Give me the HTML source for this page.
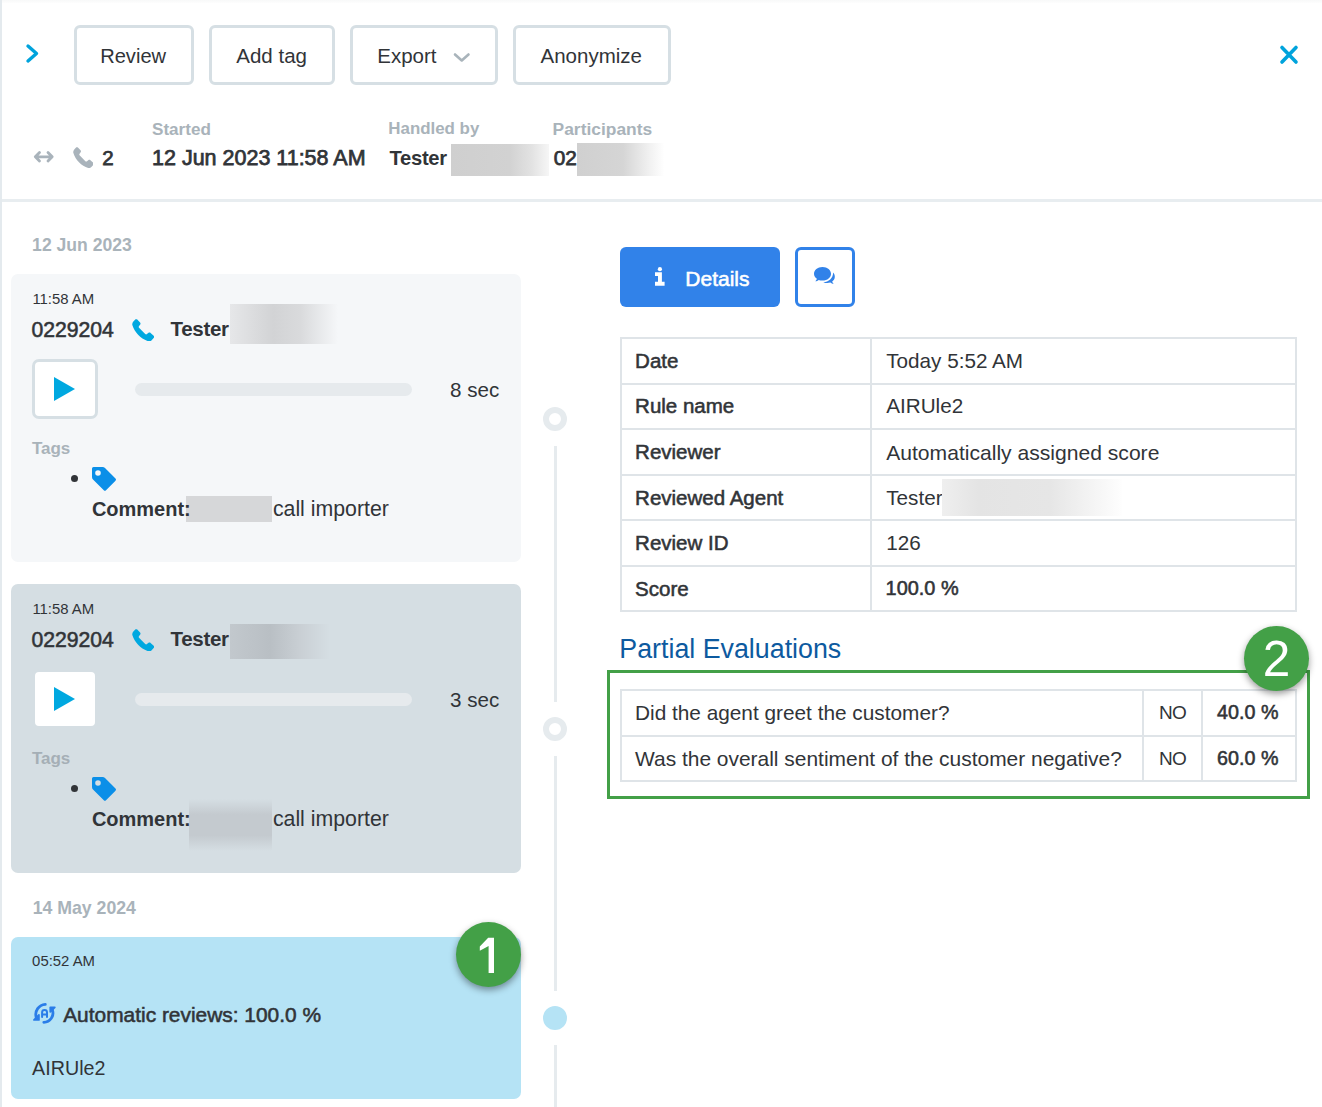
<!DOCTYPE html>
<html><head><meta charset="utf-8"><style>
html,body{margin:0;padding:0}
body{width:1322px;height:1107px;overflow:hidden;position:relative;background:#fff;font-family:"Liberation Sans",sans-serif}
.t{position:absolute;white-space:nowrap}
.b{position:absolute}
</style></head><body>
<div class="b" style="left:0px;top:0px;width:2px;height:1107px;background:#e4eaee"></div>
<div class="b" style="left:2px;top:0px;width:1320px;height:3px;background:linear-gradient(#f8f9f9,#fdfdfd)"></div>
<div class="b" style="left:2px;top:199px;width:1320px;height:3px;background:#e8edf0"></div>
<svg class="b" style="left:20px;top:40px" width="24" height="26" viewBox="20 40 24 26"><polyline points="28,46 36.5,53.5 28,61" fill="none" stroke="#00a3dc" stroke-width="3.4" stroke-linecap="round" stroke-linejoin="round"/></svg>
<div class="b" style="left:74px;top:25px;width:114px;height:54px;border:3px solid #d6dfe4;border-radius:6px;background:#fff"></div>
<div class="b" style="left:209px;top:25px;width:120px;height:54px;border:3px solid #d6dfe4;border-radius:6px;background:#fff"></div>
<div class="b" style="left:350px;top:25px;width:142px;height:54px;border:3px solid #d6dfe4;border-radius:6px;background:#fff"></div>
<div class="b" style="left:513px;top:25px;width:152px;height:54px;border:3px solid #d6dfe4;border-radius:6px;background:#fff"></div>
<div class="t" style="left:100.2px;top:45.6px;font-size:20.1px;line-height:20.1px;color:#313438;">Review</div>
<div class="t" style="left:236.3px;top:45.5px;font-size:20.5px;line-height:20.5px;color:#313438;">Add tag</div>
<div class="t" style="left:377.3px;top:45.5px;font-size:20.5px;line-height:20.5px;color:#313438;">Export</div>
<div class="t" style="left:540.5px;top:45.5px;font-size:20.5px;line-height:20.5px;color:#313438;">Anonymize</div>
<svg class="b" style="left:450px;top:50px" width="24" height="16" viewBox="450 50 24 16"><polyline points="455,54.5 461.75,60.5 468.5,54.5" fill="none" stroke="#a9b4bb" stroke-width="2.6" stroke-linecap="round" stroke-linejoin="round"/></svg>
<svg class="b" style="left:1276px;top:42px" width="26" height="26" viewBox="1276 42 26 26"><path d="M1282,47.5 L1296,62 M1296,47.5 L1282,62" fill="none" stroke="#00a3dc" stroke-width="3.6" stroke-linecap="round"/></svg>
<svg class="b" style="left:30px;top:146px" width="28" height="22" viewBox="30 146 28 22"><path d="M35.5,156.8 H52 M39.5,152.5 L35.3,156.8 L39.5,161.1 M48,152.5 L52.2,156.8 L48,161.1" fill="none" stroke="#a9b3bb" stroke-width="2.8" stroke-linecap="round" stroke-linejoin="round"/></svg>
<svg class="b" style="left:72.5px;top:146.5px" width="20.9" height="21.4" viewBox="3.8 4.9 21.6 22.1" preserveAspectRatio="none"><path d="M7.2,5.2 C7.8,4.9 8.4,5.0 8.9,5.5 L11.6,8.3 C12.2,8.9 12.2,9.8 11.7,10.4 L10.6,11.8 C10.2,12.3 10.2,13 10.6,13.5 L16.6,19.5 C17.1,20 17.8,20 18.3,19.6 L19.8,18.4 C20.4,17.9 21.3,17.9 21.8,18.5 L24.8,21.3 C25.4,21.9 25.4,22.8 24.8,23.4 L22.8,25.6 C22,26.5 20.8,27 19.6,26.6 C12.5,24.3 6.3,18 4.2,11 C3.8,9.7 4.2,8.4 5.1,7.4 Z" fill="#a9b3bb"/></svg>
<div class="t" style="left:102.3px;top:147.6px;font-size:20.5px;line-height:20.5px;-webkit-text-stroke:0.55px #313438;color:#313438;-webkit-text-stroke-width:0.75px">2</div>
<div class="t" style="left:152.0px;top:120.9px;font-size:17.1px;line-height:17.1px;font-weight:bold;color:#a9b3ba;">Started</div>
<div class="t" style="left:388.3px;top:120.9px;font-size:16.9px;line-height:16.9px;font-weight:bold;color:#a9b3ba;">Handled by</div>
<div class="t" style="left:552.6px;top:120.9px;font-size:17.4px;line-height:17.4px;font-weight:bold;color:#a9b3ba;">Participants</div>
<div class="t" style="left:152.0px;top:147.5px;font-size:21.5px;line-height:21.5px;-webkit-text-stroke:0.55px #313438;color:#313438;-webkit-text-stroke-width:0.75px">12 Jun 2023 11:58 AM</div>
<div class="t" style="left:389.5px;top:147.5px;font-size:20.2px;line-height:20.2px;font-weight:bold;color:#313438;letter-spacing:-0.3px">Tester</div>
<div class="t" style="left:553.8px;top:147.6px;font-size:20.8px;line-height:20.8px;-webkit-text-stroke:0.55px #313438;color:#313438;-webkit-text-stroke-width:0.75px">02</div>
<div class="b" style="left:451px;top:144px;width:98px;height:32px;background:linear-gradient(90deg,#cfcfcf 0%,#d2d2d2 60%,#e2e2e2 82%,#f6f6f6 100%)"></div>
<div class="b" style="left:577px;top:143px;width:92px;height:33px;background:linear-gradient(90deg,#d0d0d0 0%,#d5d5d5 50%,#f2f2f2 80%,#ffffff 95%)"></div>
<div class="t" style="left:32.1px;top:236.9px;font-size:17.6px;line-height:17.6px;font-weight:bold;color:#a9b3ba;">12 Jun 2023</div>
<div class="b" style="left:11px;top:274px;width:510px;height:288px;background:#f5f7f9;border-radius:7px"></div>
<div class="t" style="left:32.4px;top:291.8px;font-size:14.9px;line-height:14.9px;color:#313438;">11:58 AM</div>
<div class="t" style="left:31.4px;top:318.6px;font-size:21.2px;line-height:21.2px;-webkit-text-stroke:0.55px #313438;color:#313438;">0229204</div>
<svg class="b" style="left:131.8px;top:318.7px" width="22.3" height="22.7" viewBox="3.8 4.9 21.6 22.1" preserveAspectRatio="none"><path d="M7.2,5.2 C7.8,4.9 8.4,5.0 8.9,5.5 L11.6,8.3 C12.2,8.9 12.2,9.8 11.7,10.4 L10.6,11.8 C10.2,12.3 10.2,13 10.6,13.5 L16.6,19.5 C17.1,20 17.8,20 18.3,19.6 L19.8,18.4 C20.4,17.9 21.3,17.9 21.8,18.5 L24.8,21.3 C25.4,21.9 25.4,22.8 24.8,23.4 L22.8,25.6 C22,26.5 20.8,27 19.6,26.6 C12.5,24.3 6.3,18 4.2,11 C3.8,9.7 4.2,8.4 5.1,7.4 Z" fill="#00a8e0"/></svg>
<div class="t" style="left:170.5px;top:318.5px;font-size:20.5px;line-height:20.5px;font-weight:bold;color:#313438;letter-spacing:-0.3px">Tester</div>
<div class="b" style="left:230px;top:304px;width:108px;height:40px;background:linear-gradient(90deg,#e6e7e9 0%,#d2d3d5 40%,#d9dadc 65%,#f5f7f9 100%)"></div>
<div class="b" style="left:32px;top:359px;width:60px;height:54px;border:3px solid #d6dfe4;border-radius:7px;background:#fff"></div>
<svg class="b" style="left:50px;top:374px" width="30" height="30" viewBox="50 374 30 30"><polygon points="54,377 75,389 54,401" fill="#00a8e0"/></svg>
<div class="b" style="left:135px;top:383px;width:277px;height:13px;background:#e6eaed;border-radius:7px"></div>
<div class="t" style="left:450.0px;top:379.9px;font-size:20.6px;line-height:20.6px;color:#313438;">8 sec</div>
<div class="t" style="left:31.9px;top:439.7px;font-size:17px;line-height:17px;font-weight:bold;color:#a9b3ba;">Tags</div>
<div class="b" style="left:71px;top:475px;width:7px;height:7px;background:#313438;border-radius:50%"></div>
<svg class="b" style="left:90px;top:465px" width="28" height="28" viewBox="0 0 28 28"><path d="M3.5,2 H12.5 Q14,2 15,3 L25.5,13.5 Q26.6,14.6 25.5,15.7 L16,25.2 Q14.9,26.3 13.8,25.2 L3,14.5 Q2,13.5 2,12 V3.5 Q2,2 3.5,2 Z M8,5.2 A2.8,2.8 0 1 0 8,10.8 A2.8,2.8 0 1 0 8,5.2 Z" fill="#0b8fe8" fill-rule="evenodd"/></svg>
<div class="b" style="left:186px;top:496px;width:86px;height:26px;background:#d6d7d9"></div>
<div class="t" style="left:91.9px;top:499.0px;font-size:20px;line-height:20px;font-weight:bold;color:#313438;">Comment:</div>
<div class="t" style="left:272.9px;top:498.8px;font-size:21.3px;line-height:21.3px;color:#313438;">call importer</div>
<div class="b" style="left:11px;top:584px;width:510px;height:289px;background:#d5dee3;border-radius:7px"></div>
<div class="t" style="left:32.4px;top:601.8px;font-size:14.9px;line-height:14.9px;color:#313438;">11:58 AM</div>
<div class="t" style="left:31.4px;top:628.6px;font-size:21.2px;line-height:21.2px;-webkit-text-stroke:0.55px #313438;color:#313438;">0229204</div>
<svg class="b" style="left:131.8px;top:628.7px" width="22.3" height="22.7" viewBox="3.8 4.9 21.6 22.1" preserveAspectRatio="none"><path d="M7.2,5.2 C7.8,4.9 8.4,5.0 8.9,5.5 L11.6,8.3 C12.2,8.9 12.2,9.8 11.7,10.4 L10.6,11.8 C10.2,12.3 10.2,13 10.6,13.5 L16.6,19.5 C17.1,20 17.8,20 18.3,19.6 L19.8,18.4 C20.4,17.9 21.3,17.9 21.8,18.5 L24.8,21.3 C25.4,21.9 25.4,22.8 24.8,23.4 L22.8,25.6 C22,26.5 20.8,27 19.6,26.6 C12.5,24.3 6.3,18 4.2,11 C3.8,9.7 4.2,8.4 5.1,7.4 Z" fill="#00a8e0"/></svg>
<div class="t" style="left:170.5px;top:628.5px;font-size:20.5px;line-height:20.5px;font-weight:bold;color:#313438;letter-spacing:-0.3px">Tester</div>
<div class="b" style="left:230px;top:624px;width:100px;height:35px;background:linear-gradient(90deg,#c2c8cd 0%,#b9bfc4 40%,#c9cfd4 70%,#d5dee3 100%)"></div>
<div class="b" style="left:32px;top:669px;width:60px;height:54px;border:3px solid #d5dee3;border-radius:7px;background:#fff"></div>
<svg class="b" style="left:50px;top:684px" width="30" height="30" viewBox="50 684 30 30"><polygon points="54,687 75,699 54,711" fill="#00a8e0"/></svg>
<div class="b" style="left:135px;top:693px;width:277px;height:13px;background:#e6eaed;border-radius:7px"></div>
<div class="t" style="left:450.0px;top:689.9px;font-size:20.6px;line-height:20.6px;color:#313438;">3 sec</div>
<div class="t" style="left:31.9px;top:749.7px;font-size:17px;line-height:17px;font-weight:bold;color:#a5afb6;">Tags</div>
<div class="b" style="left:71px;top:785px;width:7px;height:7px;background:#313438;border-radius:50%"></div>
<svg class="b" style="left:90px;top:775px" width="28" height="28" viewBox="0 0 28 28"><path d="M3.5,2 H12.5 Q14,2 15,3 L25.5,13.5 Q26.6,14.6 25.5,15.7 L16,25.2 Q14.9,26.3 13.8,25.2 L3,14.5 Q2,13.5 2,12 V3.5 Q2,2 3.5,2 Z M8,5.2 A2.8,2.8 0 1 0 8,10.8 A2.8,2.8 0 1 0 8,5.2 Z" fill="#0b8fe8" fill-rule="evenodd"/></svg>
<div class="b" style="left:189px;top:799px;width:83px;height:52px;background:linear-gradient(#d5dee3,#c4cacf 30%,#c4cacf 70%,#d5dee3)"></div>
<div class="t" style="left:91.9px;top:809.0px;font-size:20px;line-height:20px;font-weight:bold;color:#313438;">Comment:</div>
<div class="t" style="left:272.9px;top:808.8px;font-size:21.3px;line-height:21.3px;color:#313438;">call importer</div>
<div class="t" style="left:32.7px;top:900.4px;font-size:17.7px;line-height:17.7px;font-weight:bold;color:#a9b3ba;">14 May 2024</div>
<div class="b" style="left:11px;top:937px;width:510px;height:162px;background:#b5e3f5;border-radius:7px"></div>
<div class="t" style="left:32.1px;top:954.3px;font-size:14.9px;line-height:14.9px;color:#313438;">05:52 AM</div>
<svg class="b" style="left:28px;top:998px" width="34" height="32" viewBox="0 0 34 32"><g fill="none" stroke="#2a7de8" stroke-width="2.8" stroke-linecap="round"><path d="M17.3,6.3 A10.2,10.2 0 0 0 8.2,19.3"/><path d="M15.8,24.3 A9.2,9.2 0 0 0 24.3,11.8"/><path d="M14.1,19 V14.4 A2.45,2.45 0 0 1 19,14.4 V19 M14.1,16.6 H19" stroke-width="2"/></g><g fill="#2a7de8" stroke="#2a7de8" stroke-width="1.8" stroke-linejoin="round"><polygon points="6,21.9 10.9,17 10.9,21.9"/><polygon points="22.3,9.3 26.8,9.3 22.3,13.8"/></g></svg>
<div class="t" style="left:63.2px;top:1004.7px;font-size:20.9px;line-height:20.9px;-webkit-text-stroke:0.55px #313438;color:#313438;">Automatic reviews: 100.0 %</div>
<div class="t" style="left:32.1px;top:1058.9px;font-size:19.7px;line-height:19.7px;color:#313438;">AIRUle2</div>
<div class="b" style="left:554px;top:446px;width:3px;height:256px;background:#e6ebee"></div>
<div class="b" style="left:554px;top:756px;width:3px;height:235px;background:#e6ebee"></div>
<div class="b" style="left:554px;top:1045px;width:3px;height:62px;background:#e6ebee"></div>
<div class="b" style="left:543px;top:407px;width:12px;height:12px;border:6px solid #e6ebee;border-radius:50%"></div>
<div class="b" style="left:543px;top:717px;width:12px;height:12px;border:6px solid #e6ebee;border-radius:50%"></div>
<div class="b" style="left:543px;top:1006px;width:24px;height:24px;background:#b5e3f5;border-radius:50%"></div>
<div class="b" style="left:456.4px;top:922.4px;width:65px;height:65px;background:#43a047;border-radius:50%;box-shadow:0 3px 7px rgba(0,0,0,0.4)"></div>
<svg class="b" style="left:470px;top:930px" width="30" height="50" viewBox="470 930 30 50"><polygon points="494,937.8 494,973 488.6,973 488.6,946 479.8,950.8 479.8,946.4 488.2,937.8" fill="#fff"/></svg>
<div class="b" style="left:620px;top:247px;width:160px;height:60px;background:#3182e9;border-radius:6px"></div>
<svg class="b" style="left:650px;top:262px" width="20" height="28" viewBox="650 262 20 28"><circle cx="659.9" cy="269.2" r="2.1" fill="#fff"/><path d="M655,272.3 H661.9 V281.8 H664.6 V285.8 H655 V281.8 H658 V276.1 H655 Z" fill="#fff"/></svg>
<div class="t" style="left:685.3px;top:267.5px;font-size:21px;line-height:21px;-webkit-text-stroke:0.55px #fff;color:#fff;">Details</div>
<div class="b" style="left:795px;top:247px;width:54px;height:54px;border:3px solid #3182e9;border-radius:6px;background:#fff"></div>
<svg class="b" style="left:806px;top:258px" width="38" height="34" viewBox="806 258 38 34"><path d="M822.5,267 C827.5,267 831,270 831,273.8 C831,277.6 827.5,280.6 822.5,280.6 C820.8,280.6 819.8,280.3 818.8,280 C817.8,280.8 816.5,281.3 815.3,281.3 C816.2,280.5 816.7,279.6 816.9,278.8 C815,277.6 814,275.8 814,273.8 C814,270 817.5,267 822.5,267 Z" fill="#3182e9"/><path d="M833.2,272.5 C834.3,273.8 834.8,275.2 834.8,276.7 C834.8,278.6 833.8,280.3 832.2,281.5 C832.4,282.3 832.9,283.1 833.7,283.8 C832.5,283.8 831.3,283.3 830.4,282.5 C829.4,282.8 828.3,283 827.2,283 C825.8,283 824.4,282.8 823.3,282.4 C828.8,282 833,278.3 833.2,272.5 Z" fill="#3182e9"/></svg>
<div class="b" style="left:620px;top:337px;width:677px;height:275px;border:2px solid #dfe4e8;box-sizing:border-box"></div>
<div class="b" style="left:870px;top:337px;width:2px;height:275px;background:#dfe4e8"></div>
<div class="b" style="left:620px;top:383px;width:677px;height:2px;background:#dfe4e8"></div>
<div class="b" style="left:620px;top:428px;width:677px;height:2px;background:#dfe4e8"></div>
<div class="b" style="left:620px;top:474px;width:677px;height:2px;background:#dfe4e8"></div>
<div class="b" style="left:620px;top:519px;width:677px;height:2px;background:#dfe4e8"></div>
<div class="b" style="left:620px;top:565px;width:677px;height:2px;background:#dfe4e8"></div>
<div class="t" style="left:635.1px;top:350.8px;font-size:20.5px;line-height:20.5px;-webkit-text-stroke:0.55px #313438;color:#313438;">Date</div>
<div class="t" style="left:886.2px;top:350.8px;font-size:20.7px;line-height:20.7px;color:#313438;">Today 5:52 AM</div>
<div class="t" style="left:635.1px;top:396.4px;font-size:20.5px;line-height:20.5px;-webkit-text-stroke:0.55px #313438;color:#313438;">Rule name</div>
<div class="t" style="left:886.2px;top:396.4px;font-size:20.7px;line-height:20.7px;color:#313438;">AIRUle2</div>
<div class="t" style="left:635.1px;top:441.9px;font-size:20.5px;line-height:20.5px;-webkit-text-stroke:0.55px #313438;color:#313438;">Reviewer</div>
<div class="t" style="left:886.2px;top:441.8px;font-size:21.1px;line-height:21.1px;color:#313438;">Automatically assigned score</div>
<div class="t" style="left:635.1px;top:487.5px;font-size:20.5px;line-height:20.5px;-webkit-text-stroke:0.55px #313438;color:#313438;">Reviewed Agent</div>
<div class="t" style="left:886.2px;top:487.5px;font-size:20.7px;line-height:20.7px;color:#313438;">Tester</div>
<div class="t" style="left:635.1px;top:533.0px;font-size:20.5px;line-height:20.5px;-webkit-text-stroke:0.55px #313438;color:#313438;">Review ID</div>
<div class="t" style="left:886.2px;top:533.0px;font-size:20.7px;line-height:20.7px;color:#313438;">126</div>
<div class="t" style="left:635.1px;top:578.6px;font-size:20.5px;line-height:20.5px;-webkit-text-stroke:0.55px #313438;color:#313438;">Score</div>
<div class="t" style="left:885.6px;top:578.7px;font-size:19.9px;line-height:19.9px;-webkit-text-stroke:0.55px #313438;color:#313438;">100.0 %</div>
<div class="b" style="left:942px;top:479px;width:180px;height:37px;background:linear-gradient(90deg,#efefef 0%,#e4e4e4 20%,#e6e6e6 60%,#fefefe 100%)"></div>
<div class="t" style="left:619.3px;top:636.4px;font-size:26.8px;line-height:26.8px;color:#0d5a9f;">Partial Evaluations</div>
<div class="b" style="left:607px;top:670px;width:703px;height:129px;border:3px solid #43a047;box-sizing:border-box"></div>
<div class="b" style="left:620px;top:689px;width:677px;height:93px;border:2px solid #dfe4e8;box-sizing:border-box"></div>
<div class="b" style="left:620px;top:735px;width:677px;height:2px;background:#dfe4e8"></div>
<div class="b" style="left:1142px;top:689px;width:2px;height:93px;background:#dfe4e8"></div>
<div class="b" style="left:1201px;top:689px;width:2px;height:93px;background:#dfe4e8"></div>
<div class="t" style="left:635.0px;top:702.7px;font-size:20.8px;line-height:20.8px;color:#313438;">Did the agent greet the customer?</div>
<div class="t" style="left:1159.0px;top:702.9px;font-size:19px;line-height:19px;color:#313438;letter-spacing:-0.8px">NO</div>
<div class="t" style="left:1217.1px;top:702.8px;font-size:19.7px;line-height:19.7px;-webkit-text-stroke:0.55px #313438;color:#313438;">40.0 %</div>
<div class="t" style="left:635.0px;top:748.8px;font-size:20.95px;line-height:20.95px;color:#313438;">Was the overall sentiment of the customer negative?</div>
<div class="t" style="left:1159.0px;top:749.0px;font-size:19px;line-height:19px;color:#313438;letter-spacing:-0.8px">NO</div>
<div class="t" style="left:1217.1px;top:748.9px;font-size:19.7px;line-height:19.7px;-webkit-text-stroke:0.55px #313438;color:#313438;">60.0 %</div>
<div class="b" style="left:1244.3px;top:625.6px;width:65px;height:65px;background:#43a047;border-radius:50%;box-shadow:0 3px 7px rgba(0,0,0,0.4)"></div>
<div class="t" style="left:1262.8px;top:634.3px;font-size:49.5px;line-height:49.5px;color:#fff;">2</div>
</body></html>
